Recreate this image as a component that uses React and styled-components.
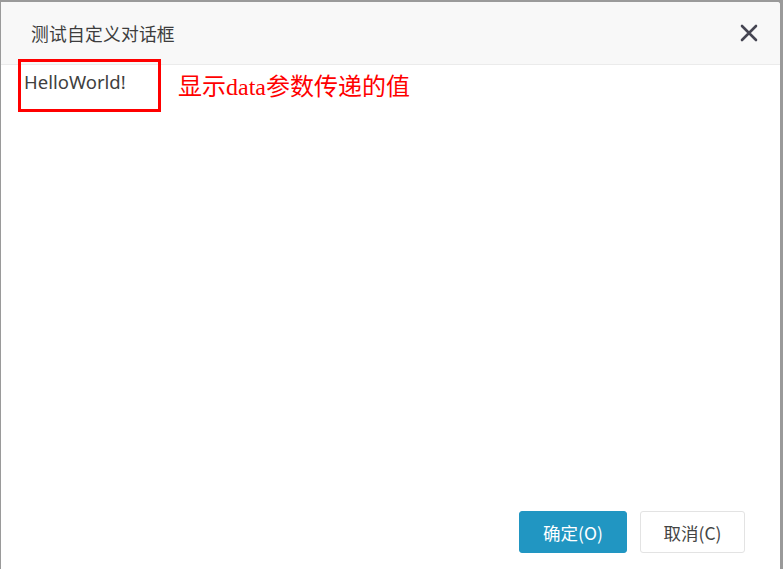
import styled, { createGlobalStyle } from "styled-components";

const GlobalStyle = createGlobalStyle`
  html, body {
    margin: 0;
    padding: 0;
    height: 100%;
    background: #9a9a9a;
  }
  #root {
    height: 100%;
  }
`;

const Page = styled.div`
  height: 569px;
  width: 783px;
  padding: 2px 3px 0 1px;
  box-sizing: border-box;
  display: flex;
`;

const Dialog = styled.div`
  position: relative;
  flex: 1;
  background: #fff;
  border-top-right-radius: 3px;
  display: flex;
  flex-direction: column;
  font-family: "Noto Sans CJK SC", "Noto Sans", sans-serif;
  color: #333;
`;

const Header = styled.div`
  height: 63px;
  box-sizing: border-box;
  background: #f8f8f8;
  border-bottom: 1px solid #ebebeb;
  display: flex;
  align-items: center;
  justify-content: space-between;
  padding: 0 21px 0 30px;
  border-top-right-radius: 3px;
`;

const Title = styled.span`
  font-size: 17.8px;
  color: #3d3d3d;
  letter-spacing: 0.2px;
`;

const Close = styled.button`
  border: none;
  background: none;
  padding: 0;
  width: 20px;
  height: 20px;
  cursor: pointer;
  display: flex;
  align-items: center;
  justify-content: center;
  svg {
    display: block;
  }
`;

const Body = styled.div`
  flex: 1;
  padding: 4px 23px;
`;

const Hello = styled.div`
  font-size: 18.5px;
  color: #404040;
  line-height: 26px;
  font-family: "Noto Sans", "Noto Sans CJK SC", sans-serif;
`;

const Mark = styled.div`
  position: absolute;
  left: 17px;
  top: 57px;
  width: 143px;
  height: 53px;
  box-sizing: border-box;
  border: 3px solid #ff0000;
`;

const Note = styled.div`
  position: absolute;
  left: 177px;
  top: 69px;
  font-family: "Liberation Serif", "Noto Sans CJK SC", serif;
  font-size: 24px;
  line-height: 32px;
  color: #ff0000;
  white-space: nowrap;
`;

const Footer = styled.div`
  display: flex;
  justify-content: flex-end;
  gap: 13px;
  padding: 0 35px 16px 0;
`;

const Button = styled.button`
  height: 42px;
  width: ${(p) => (p.primary ? "108px" : "105px")};
  border-radius: 3px;
  font-family: "Noto Sans CJK SC", "Noto Sans", sans-serif;
  font-size: 17.5px;
  cursor: pointer;
  border: 1px solid ${(p) => (p.primary ? "#2196c2" : "#e3e3e3")};
  background: ${(p) => (p.primary ? "#2196c2" : "#fff")};
  color: ${(p) => (p.primary ? "#fff" : "#444")};
`;

export default function App() {
  return (
    <Page>
      <GlobalStyle />
      <Dialog>
        <Header>
          <Title>测试自定义对话框</Title>
          <Close>
            <svg width="18" height="18" viewBox="0 0 18 18">
              <path
                d="M2 2 L16 16 M16 2 L2 16"
                stroke="#454552"
                strokeWidth="2.6"
                strokeLinecap="round"
              />
            </svg>
          </Close>
        </Header>
        <Body>
          <Hello>HelloWorld!</Hello>
        </Body>
        <Footer>
          <Button primary>确定(O)</Button>
          <Button>取消(C)</Button>
        </Footer>
        <Mark />
        <Note>显示data参数传递的值</Note>
      </Dialog>
    </Page>
  );
}
